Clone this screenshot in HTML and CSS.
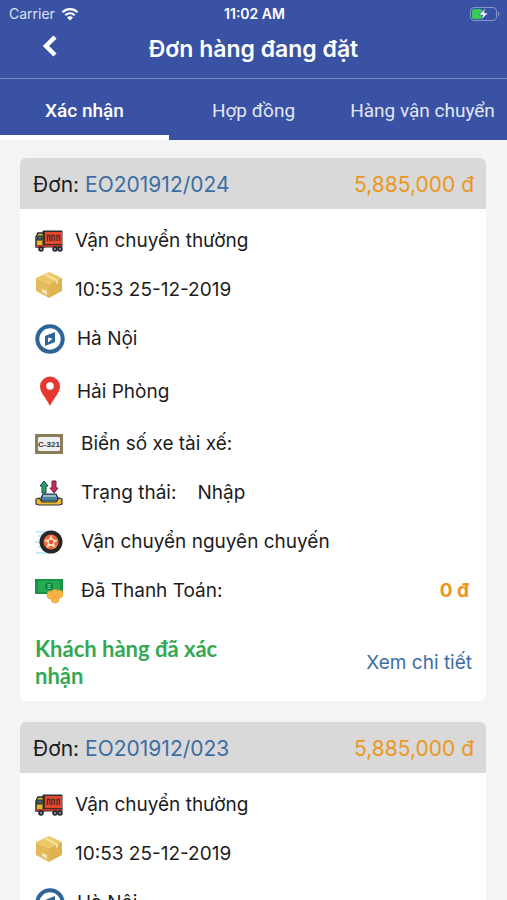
FILE: index.html
```
<!DOCTYPE html>
<html lang="vi">
<head>
<meta charset="UTF-8">
<meta name="viewport" content="width=device-width, initial-scale=1.0">
<title>Đơn hàng đang đặt</title>
<link rel="stylesheet" href="styles.css">
</head>
<body>
<svg class="sprite" aria-hidden="true">
  <symbol id="truck" viewBox="0 0 28 24">
    <path d="M1 18V8l2-4h6v14z" fill="#e5b62e" stroke="#252c32" stroke-width="1.5"/>
    <path d="M3 7h4v4H2z" fill="#3d6470" stroke="#252c32"/>
    <path d="M8 2h19v16H8z" fill="#4a2a26" stroke="#252c32"/>
    <path d="M10 3h17v12H10z" fill="#e5482c"/>
    <path d="M12.500 12V6.500h2.500V12M17 12V6.500h2.500V12M22 12V6.500h2.500V12" fill="none" stroke="#5c2924" stroke-width="1.3"/>
    <path d="M1 17h26" stroke="#b83a26" stroke-width="2"/>
    <g fill="#7b8690" stroke="#20262b" stroke-width="1.5"><circle cx="6" cy="20" r="2"/><circle cx="20" cy="20" r="2"/><circle cx="25" cy="20" r="2"/></g>
  </symbol>
  <symbol id="box" viewBox="0 0 28 28">
    <path d="M14 1l13 6-13 6L1 7z" fill="#ebc766"/>
    <path d="M1 7l13 6v14L1 20z" fill="#e5ba58"/>
    <path d="M27 7l-13 6v14l13-7z" fill="#dfb351"/>
    <path d="M9 4l3-1 11 6v3l-2 1v-3z" fill="#f7e3a5"/>
    <path d="M7 18l5 2v4l-5-3z" fill="#f8e8bb"/>
  </symbol>
  <symbol id="compass" viewBox="0 0 30 30">
    <circle cx="15" cy="15" r="12.7" fill="#fff" stroke="#2f6499" stroke-width="4"/>
    <path d="M20 8v10l-10 4V12z" fill="#2f6499"/>
    <path d="M13 13.500l4.500 1.200-4.500 3.800z" fill="#fff"/>
  </symbol>
  <symbol id="pin" viewBox="0 0 22 30">
    <path d="M11 30C8 23 1 17 1 10.500a10 10 0 0 1 20 0C21 17 14 23 11 30z" fill="#e5392f"/>
    <circle cx="11" cy="10" r="3.800" fill="#fff"/>
  </symbol>
  <symbol id="cargo" viewBox="0 0 28 28">
    <path d="M9 2l4 5h-2v7H7V7H5z" fill="#20a66c" stroke="#1e4440"/>
    <path d="M19 14l4-5h-2V2h-4v7h-2z" fill="#df2455" stroke="#512a3c"/>
    <path d="M8 15h13l2 4v3H6v-3z" fill="#4f819c" stroke="#22333d" stroke-width="1.200"/>
    <path d="M8 17h13" stroke="#b2ced9" stroke-width="1.500"/>
    <path d="M1 20l3-1 3 4h14l3-4 3 1v5l-3 1H4l-3-1z" fill="#efb72e" stroke="#33363a" stroke-width="1.200"/>
  </symbol>
  <symbol id="wheel" viewBox="0 0 28 26">
    <path d="M1 3h10M3 7h6M0 13h7M3 18h7M1 24h11" stroke="#b5e8f3" stroke-width="1.500"/>
    <circle cx="16" cy="13" r="11.500" fill="#272829"/>
    <circle cx="16" cy="13" r="7.500" fill="#f0693f"/>
    <path d="M16 6l2 4.500 5 .5-4 3 1.500 5-4.500-2.500-4.500 2.500 1.500-5-4-3 5-.5z" fill="#ffe3bd"/>
    <circle cx="16" cy="13" r="2.200" fill="#e84d3e"/>
  </symbol>
  <symbol id="money" viewBox="0 0 28 26">
    <path d="M0 1h28v15H0z" fill="#199447"/>
    <path d="M3 3h22v11H3z" fill="#27aa56"/>
    <circle cx="14" cy="8.500" r="4" fill="#138340"/>
    <path d="M16 6.500h-3v2h2v2h-3" fill="none" stroke="#69c982"/>
    <g fill="#f8b548" stroke="#e99c32" stroke-width=".7"><circle cx="20" cy="21" r="4"/><circle cx="16" cy="17" r="4"/><circle cx="24" cy="16" r="4"/><circle cx="20" cy="15" r="3.500"/></g>
  </symbol>
</svg>

<div class="app">
  <header class="header">
    <div class="status-bar">
      <span class="carrier">Carrier
        <svg class="wifi" viewBox="0 0 18 14" aria-hidden="true">
          <path d="M1.500 5.200a10.600 10.600 0 0 1 15 0M4.300 8.200a6.700 6.700 0 0 1 9.400 0" fill="none" stroke="#fff" stroke-width="2.200"/>
          <path d="M9 13.500l-3-3a4.200 4.200 0 0 1 6 0z" fill="#fff"/>
        </svg>
      </span>
      <span class="clock">11:02 AM</span>
      <svg class="battery" viewBox="0 0 30 14" aria-hidden="true">
        <rect x=".5" y=".5" width="26" height="13" rx="3.500" fill="none" stroke="#8694c9"/>
        <path d="M28 4.500c2 1 2 4 0 5z" fill="#8694c9"/>
        <rect x="2" y="2" width="10" height="10" rx="2" fill="#35cc58"/>
        <path d="M15.500 1L9 8h4l-2 5 7-7h-4z" fill="#fff" stroke="#3952a4" stroke-width=".6"/>
      </svg>
    </div>
    <div class="title-bar">
      <button class="back" type="button" aria-label="Quay lại">
        <svg viewBox="0 0 16 22" aria-hidden="true"><path d="M13 2L4 11l9 9" fill="none" stroke="#fff" stroke-width="4.500"/></svg>
      </button>
      <h1 class="title">Đơn hàng đang đặt</h1>
    </div>
    <nav class="tabs">
      <a class="tab active" href="#confirm">Xác nhận</a>
      <a class="tab" href="#contract">Hợp đồng</a>
      <a class="tab" href="#shipping">Hàng vận chuyển</a>
    </nav>
  </header>

  <main class="orders">
    <article class="card">
      <div class="card-header">
        <h2 class="order-code">Đơn: <a href="#024">EO201912/024</a></h2>
        <span class="price">5,885,000 đ</span>
      </div>
      <ul class="details">
        <li class="row"><svg class="icon"><use href="#truck"/></svg>Vận chuyển thường</li>
        <li class="row"><svg class="icon icon-box"><use href="#box"/></svg>10:53 25-12-2019</li>
        <li class="row place"><svg class="icon"><use href="#compass"/></svg>Hà Nội</li>
        <li class="row place destination"><svg class="icon"><use href="#pin"/></svg>Hải Phòng</li>
        <li class="row info">
          <svg class="icon" viewBox="0 0 28 20">
            <path d="M0 0h28v20H0z" fill="#8b7d55"/>
            <path d="M4 3h20l1 1v12l-1 1H4l-1-1V4z" fill="#eef0f2"/>
            <text class="plate-text" x="14" y="13" text-anchor="middle">C-321</text>
          </svg>Biển số xe tài xế:</li>
        <li class="row info"><svg class="icon"><use href="#cargo"/></svg>Trạng thái:<span class="state">Nhập</span></li>
        <li class="row info"><svg class="icon"><use href="#wheel"/></svg>Vận chuyển nguyên chuyến</li>
        <li class="row info"><svg class="icon"><use href="#money"/></svg>Đã Thanh Toán:<strong class="paid">0 đ</strong></li>
      </ul>
      <div class="card-footer">
        <p class="confirmed">Khách hàng đã xác nhận</p>
        <a class="more" href="#024">Xem chi tiết</a>
      </div>
    </article>

    <article class="card">
      <div class="card-header">
        <h2 class="order-code">Đơn: <a href="#023">EO201912/023</a></h2>
        <span class="price">5,885,000 đ</span>
      </div>
      <ul class="details">
        <li class="row"><svg class="icon"><use href="#truck"/></svg>Vận chuyển thường</li>
        <li class="row"><svg class="icon icon-box"><use href="#box"/></svg>10:53 25-12-2019</li>
        <li class="row place"><svg class="icon"><use href="#compass"/></svg>Hà Nội</li>
      </ul>
    </article>
  </main>
</div>
</body>
</html>
```

FILE: styles.css
```
* {
  box-sizing: border-box;
}

body {
  margin: 0;
  background: #f4f4f4;
  color: #1c1c1c;
  font-family: Inter, "Liberation Sans", sans-serif;
  font-size: 19px;
}

a {
  color: #3c6ea3;
  text-decoration: none;
}

.sprite {
  position: absolute;
  width: 0;
  height: 0;
}

.app {
  display: flex;
  flex-direction: column;
  height: 100vh;
}

/* header */
.header {
  flex: none;
  background: #3952a4;
  color: #fff;
}

.status-bar {
  display: grid;
  grid-template-columns: 1fr auto 1fr;
  align-items: center;
  height: 27px;
  padding: 0 7px 0 9px;
  font-size: 14px;
}

.carrier {
  display: flex;
  align-items: center;
  gap: 6px;
  color: #dde1f0;
}

.wifi {
  width: 18px;
  height: 14px;
}

.clock {
  font-weight: 600;
}

.battery {
  justify-self: end;
  width: 30px;
  height: 14px;
}

.title-bar {
  display: grid;
  grid-template-columns: 100px 1fr 100px;
  height: 52px;
  padding-bottom: 8px;
  align-items: center;
  border-bottom: 1px solid #7c8cc4;
}

.back {
  justify-self: center;
  padding: 0;
  border: 0;
  background: none;
  cursor: pointer;
}

.back svg {
  display: block;
  width: 16px;
  height: 22px;
  margin-bottom: 6px;
}

.title {
  margin: 0;
  text-align: center;
  font-size: 23px;
  font-weight: 600;
}

.tabs {
  display: grid;
  grid-template-columns: repeat(3, 1fr);
  height: 61px;
}

.tab {
  padding-top: 19px;
  border-bottom: 5px solid transparent;
  color: #e3e6f3;
  font-family: Roboto, sans-serif;
  font-size: 19px;
  line-height: 26px;
  text-align: center;
  white-space: nowrap;
}

.tab.active {
  border-color: #fff;
  color: #fff;
  font-weight: 500;
}

/* order list */
.orders {
  flex: 1;
  min-height: 0;
  padding: 18px 21px 0 20px;
  overflow-y: auto;
  scrollbar-width: none;
}

.card {
  margin-bottom: 21px;
  border-radius: 6px;
  background: #fff;
  overflow: hidden;
}

.card-header {
  display: flex;
  justify-content: space-between;
  align-items: center;
  height: 51px;
  padding: 2px 12px 0 13px;
  background: #d9d9d9;
  font-size: 21px;
}

.order-code {
  margin: 0;
  font-size: 21px;
  font-weight: 400;
}

.price {
  color: #ec971f;
}

.details {
  margin: 0;
  padding: 7px 17px 0 14px;
  list-style: none;
}

.row {
  display: flex;
  align-items: center;
  gap: 11px;
  height: 49px;
}

.icon {
  flex: none;
  width: 30px;
  height: 28px;
  padding: 0 1px;
}

.icon-box {
  margin-bottom: 10px;
}

.place {
  gap: 12px;
}

.place .icon {
  width: 31px;
  height: 30px;
  padding: 0 0 0 1px;
}

.destination {
  height: 56px;
}

.info {
  gap: 17px;
}

.plate-text {
  font-family: "Liberation Sans", sans-serif;
  font-size: 8px;
  font-weight: 700;
  fill: #33353a;
}

.state {
  margin-left: 4px;
}

.paid {
  margin-left: auto;
  color: #ec971f;
  font-weight: 700;
}

.card-footer {
  display: flex;
  justify-content: space-between;
  align-items: center;
  padding: 20px 14px 12px 15px;
}

.confirmed {
  max-width: 200px;
  margin: 0;
  color: #34a853;
  font-family: Lato, sans-serif;
  font-size: 22px;
  font-weight: 700;
  line-height: 27px;
}

.more {
  font-size: 19px;
}
```
